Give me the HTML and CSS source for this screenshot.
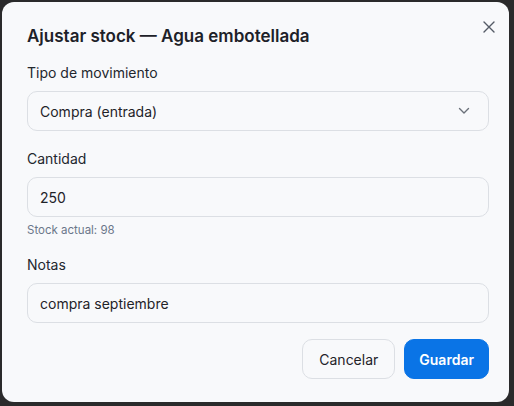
FILE: index.html
```html
<!DOCTYPE html>
<html lang="es">
<head>
    <meta charset="UTF-8">
    <meta name="viewport" content="width=device-width, initial-scale=1.0">
    <title>Ajustar stock</title>
    <link rel="stylesheet" href="styles.css">
</head>
<body>
    <div class="backdrop">
        <div class="modal">
            <button class="close" aria-label="Cerrar">
                <svg width="12" height="12" viewBox="0 0 12 12"><path d="M1 1L11 11M11 1L1 11" stroke="#555b66" stroke-width="1.4" stroke-linecap="round"/></svg>
            </button>
            <h2>Ajustar stock — Agua embotellada</h2>

            <div class="field">
                <label>Tipo de movimiento</label>
                <div class="select">
                    <span>Compra (entrada)</span>
                    <svg width="12" height="8" viewBox="0 0 12 8"><path d="M1.5 1.5L6 6L10.5 1.5" fill="none" stroke="#6b7079" stroke-width="1.4" stroke-linecap="round" stroke-linejoin="round"/></svg>
                </div>
            </div>

            <div class="field">
                <label>Cantidad</label>
                <div class="input">250</div>
                <div class="hint">Stock actual: 98</div>
            </div>

            <div class="field">
                <label>Notas</label>
                <div class="input">compra septiembre</div>
            </div>

            <div class="actions">
                <button class="btn btn-secondary">Cancelar</button>
                <button class="btn btn-primary">Guardar</button>
            </div>
        </div>
    </div>
</body>
</html>
```

FILE: styles.css
```css
body {
    margin: 0;
    padding: 0;
    font-family: 'Inter', sans-serif;
    background: #2a2a2b;
    color: #1f2329;
}
.backdrop {
    padding: 2px 5px 4px 2px;
}
.modal {
    position: relative;
    background: #f8f9fb;
    border-radius: 12px;
    height: 400px;
    box-sizing: border-box;
    padding: 24px 20px 0 25px;
}
.close {
    position: absolute;
    top: 17px;
    right: 12px;
    background: none;
    border: none;
    padding: 2px;
    cursor: pointer;
}
.modal h2 {
    margin: 0 0 18px;
    font-size: 17px;
    font-weight: 600;
    line-height: 20px;
    color: #1d2128;
}
.field {
    margin-bottom: 19px;
}
.field label {
    display: block;
    font-size: 14px;
    line-height: 18px;
    margin-bottom: 9px;
    color: #23272e;
}
.select,
.input {
    height: 40px;
    box-sizing: border-box;
    border: 1px solid #dcdfe4;
    border-radius: 10px;
    background: #f8f9fb;
    padding: 0 12px;
    display: flex;
    align-items: center;
    font-size: 14px;
    color: #1f2329;
}
.select {
    justify-content: space-between;
    padding-right: 18px;
}
.hint {
    margin-top: 6px;
    font-size: 11.5px;
    color: #6b778a;
}
.actions {
    display: flex;
    justify-content: flex-end;
    gap: 9px;
    margin-top: -3px;
}
.btn {
    height: 40px;
    border-radius: 10px;
    font-family: 'Inter', sans-serif;
    font-size: 14px;
    padding: 0 16px;
    cursor: pointer;
}
.btn-secondary {
    background: #f8f9fb;
    border: 1px solid #dcdfe4;
    color: #1f2329;
}
.btn-primary {
    background: #0a74e6;
    border: 1px solid #0a74e6;
    color: white;
    font-weight: 600;
    padding: 0 14px;
}
```
